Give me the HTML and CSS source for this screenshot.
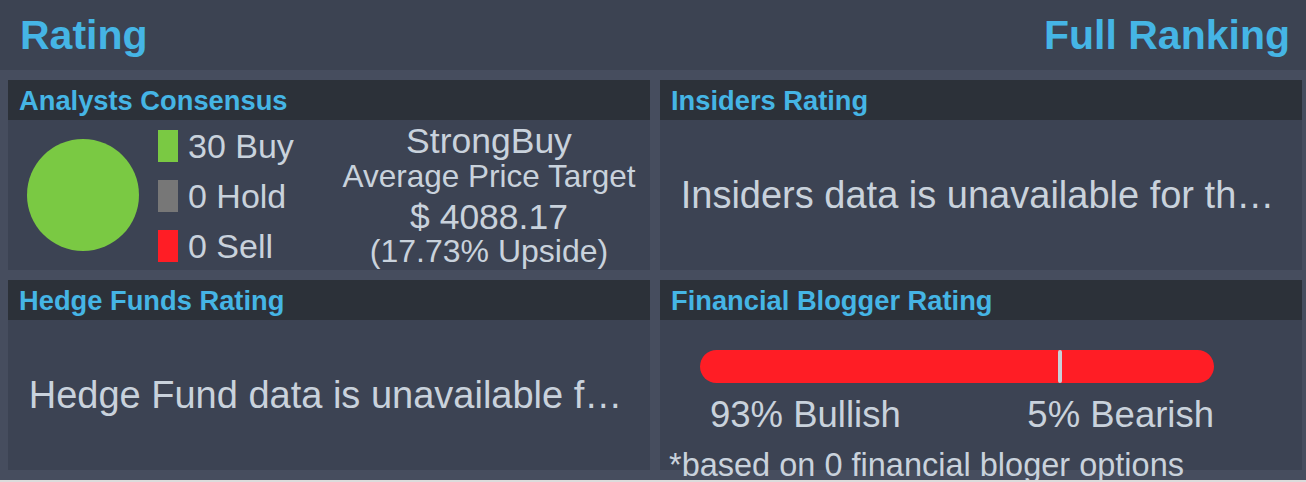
FILE: index.html
```html
<!DOCTYPE html>
<html lang="en">
<head>
<meta charset="utf-8">
<title>Rating</title>
<link rel="stylesheet" href="styles.css">
</head>
<body>
<div class="widget">
  <div class="topbar">
    <span class="title">Rating</span>
    <span class="title">Full Ranking</span>
  </div>
  <div class="grid">
    <section class="panel">
      <h2 class="panel-head">Analysts Consensus</h2>
      <div class="panel-body analysts">
        <svg class="pie" width="112" height="112" viewBox="0 0 112 112"><circle cx="56" cy="56" r="56" fill="#7ac943"/></svg>
        <ul class="legend">
          <li class="legend-row"><span class="sw sw-buy"></span><span class="legend-text">30 Buy</span></li>
          <li class="legend-row"><span class="sw sw-hold"></span><span class="legend-text">0 Hold</span></li>
          <li class="legend-row"><span class="sw sw-sell"></span><span class="legend-text">0 Sell</span></li>
        </ul>
        <div class="target">
          <div class="t-rating">StrongBuy</div>
          <div class="t-label">Average Price Target</div>
          <div class="t-price">$ 4088.17</div>
          <div class="t-upside">(17.73% Upside)</div>
        </div>
      </div>
    </section>
    <section class="panel">
      <h2 class="panel-head">Insiders Rating</h2>
      <div class="panel-body message">
        <p class="msg">Insiders data is unavailable for th…</p>
      </div>
    </section>
    <section class="panel">
      <h2 class="panel-head">Hedge Funds Rating</h2>
      <div class="panel-body message">
        <p class="msg">Hedge Fund data is unavailable f…</p>
      </div>
    </section>
    <section class="panel">
      <h2 class="panel-head">Financial Blogger Rating</h2>
      <div class="panel-body blogger">
        <div class="bar"><span class="marker"></span></div>
        <div class="bar-labels">
          <span>93% Bullish</span>
          <span>5% Bearish</span>
        </div>
        <p class="note">*based on 0 financial bloger options</p>
      </div>
    </section>
  </div>
</div>
</body>
</html>
```
FILE: styles.css
```css
html, body {
  margin: 0;
  padding: 0;
}
body {
  background: #dcdcdc;
  font-family: "Liberation Sans", Arial, Helvetica, sans-serif;
}
.widget {
  width: 1306px;
  height: 480px;
  overflow: hidden;
  background: #464d5e;
}
.topbar {
  height: 70px;
  background: #3c4352;
  display: flex;
  justify-content: space-between;
  align-items: center;
  padding: 0 16px 0 20px;
  box-sizing: border-box;
}
.title {
  font-size: 41px;
  font-weight: bold;
  line-height: 70px;
  color: #45b5e5;
}
.grid {
  display: grid;
  grid-template-columns: 642px 642px;
  grid-auto-rows: 190px;
  gap: 10px;
  padding: 10px 0 0 8px;
}
.panel {
  display: flex;
  flex-direction: column;
  min-width: 0;
}
.panel-head {
  margin: 0;
  height: 40px;
  line-height: 42px;
  padding-left: 11px;
  background: #2c3139;
  color: #45b5e5;
  font-size: 27.3px;
  font-weight: bold;
}
.panel-body {
  height: 150px;
  background: #3c4353;
  color: #c9d2dc;
  box-sizing: border-box;
}
.analysts {
  display: flex;
  align-items: flex-start;
}
.pie {
  margin: 19px 0 0 19px;
  flex: none;
}
.legend {
  list-style: none;
  margin: 10px 0 0 19px;
  padding: 0;
  display: flex;
  flex-direction: column;
  gap: 18px;
}
.legend-row {
  display: flex;
  align-items: flex-start;
  gap: 10px;
  height: 32px;
}
.sw {
  width: 20px;
  height: 32px;
  flex: none;
}
.sw-buy { background: #7ac943; }
.sw-hold { background: #777777; }
.sw-sell { background: #ff1d25; }
.legend-text {
  font-size: 34px;
  line-height: 32px;
}
.target {
  width: 300px;
  margin-left: auto;
  margin-right: 11px;
  padding-top: 3px;
  text-align: center;
  white-space: nowrap;
}
.t-rating {
  font-size: 35.5px;
  line-height: 36px;
}
.t-label {
  font-size: 31.5px;
  line-height: 34px;
}
.t-price {
  font-size: 35.5px;
  line-height: 40px;
  margin-top: 4px;
}
.t-upside {
  font-size: 32px;
  line-height: 28px;
}
.message {
  display: flex;
  align-items: center;
  justify-content: center;
  padding-right: 7px;
}
.msg {
  margin: 0;
  font-size: 38px;
  white-space: nowrap;
}
.blogger {
  padding-top: 30px;
}
.bar {
  position: relative;
  width: 514px;
  height: 33px;
  margin-left: 40px;
  border-radius: 16.5px;
  background: #ff1d25;
}
.marker {
  position: absolute;
  left: 358px;
  top: 0;
  width: 4px;
  height: 33px;
  border-radius: 2px;
  background: #c8d0d8;
}
.bar-labels {
  width: 504px;
  margin: 12px 0 0 40px;
  padding-left: 10px;
  display: flex;
  justify-content: space-between;
  font-size: 36.5px;
  line-height: 40px;
}
.note {
  margin: 12px 0 0 9px;
  font-size: 32.5px;
  line-height: 36px;
  white-space: nowrap;
}
```
